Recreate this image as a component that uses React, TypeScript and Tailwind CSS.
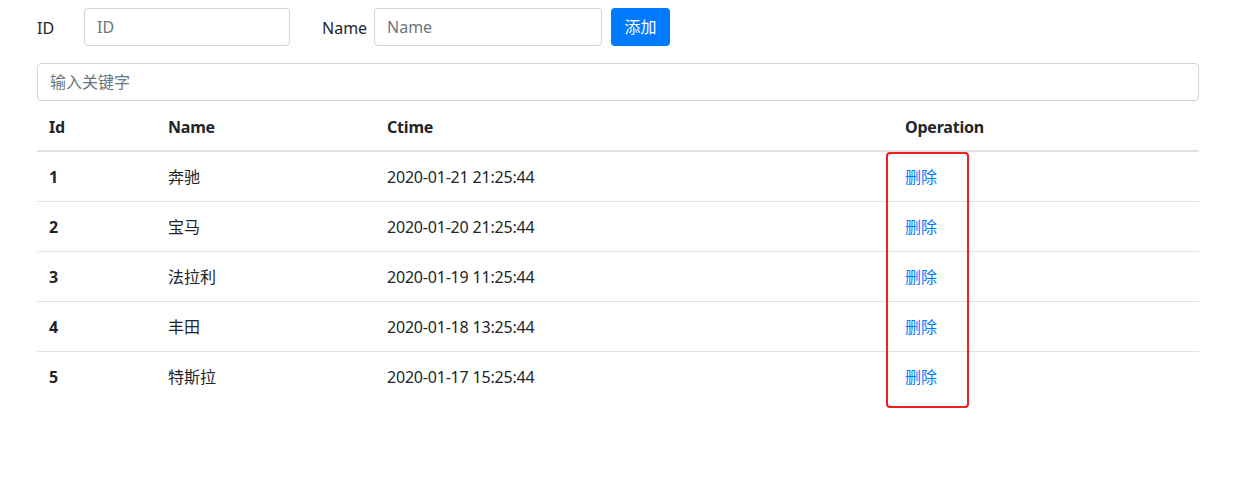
import React from "react";

const rows = [
  { id: 1, name: "奔驰", ctime: "2020-01-21 21:25:44" },
  { id: 2, name: "宝马", ctime: "2020-01-20 21:25:44" },
  { id: 3, name: "法拉利", ctime: "2020-01-19 11:25:44" },
  { id: 4, name: "丰田", ctime: "2020-01-18 13:25:44" },
  { id: 5, name: "特斯拉", ctime: "2020-01-17 15:25:44" },
];

export default function App() {
  return (
    <div
      className="w-[1240px] h-[491px] bg-white text-[#212529] text-[16px] leading-6 relative"
      style={{ fontFamily: '"Noto Sans", "Noto Sans CJK SC", sans-serif' }}
    >
      <div className="ml-[37px] w-[1162px] pt-2">
        <div className="flex items-center h-[38px]">
          <label className="w-[47px] pt-[1px]">ID</label>
          <input
            className="w-[206px] h-[38px] border border-[#ced4da] rounded-[4px] px-3 placeholder-[#6c757d] outline-none"
            placeholder="ID"
          />
          <label className="ml-[32px] w-[52px] pt-[1px]">Name</label>
          <input
            className="w-[228px] h-[38px] border border-[#ced4da] rounded-[4px] px-3 placeholder-[#6c757d] outline-none"
            placeholder="Name"
          />
          <button className="ml-[9px] w-[59px] h-[38px] bg-[#007bff] text-white rounded-[4px]">
            添加
          </button>
        </div>
        <input
          className="mt-[17px] w-full h-[38px] border border-[#ced4da] rounded-[4px] px-3 placeholder-[#6c757d] outline-none block"
          placeholder="输入关键字"
        />
        <div className="flex h-[51px] pt-[2px] items-center border-b-2 border-[#dee2e6] font-bold tracking-[-0.2px]">
          <div className="w-[119px] px-3">Id</div>
          <div className="w-[219px] px-3">Name</div>
          <div className="w-[518px] px-3">Ctime</div>
          <div className="w-[306px] px-3">Operation</div>
        </div>
        {rows.map((r, i) => (
          <div
            key={r.id}
            className={
              i === 0
                ? "flex h-[49px] items-center"
                : "flex h-[50px] items-center border-t border-[#dee2e6]"
            }
          >
            <div className="w-[119px] px-3 font-bold">{r.id}</div>
            <div className="w-[219px] px-3">{r.name}</div>
            <div className="w-[518px] px-3 tracking-[-0.2px]">{r.ctime}</div>
            <div className="w-[306px] px-3">
              <a className="text-[#007bff] cursor-pointer">删除</a>
            </div>
          </div>
        ))}
      </div>
      <div className="absolute left-[886px] top-[152px] w-[83px] h-[256px] border-2 border-[#f21d1d] rounded-[4px] pointer-events-none" />
    </div>
  );
}
